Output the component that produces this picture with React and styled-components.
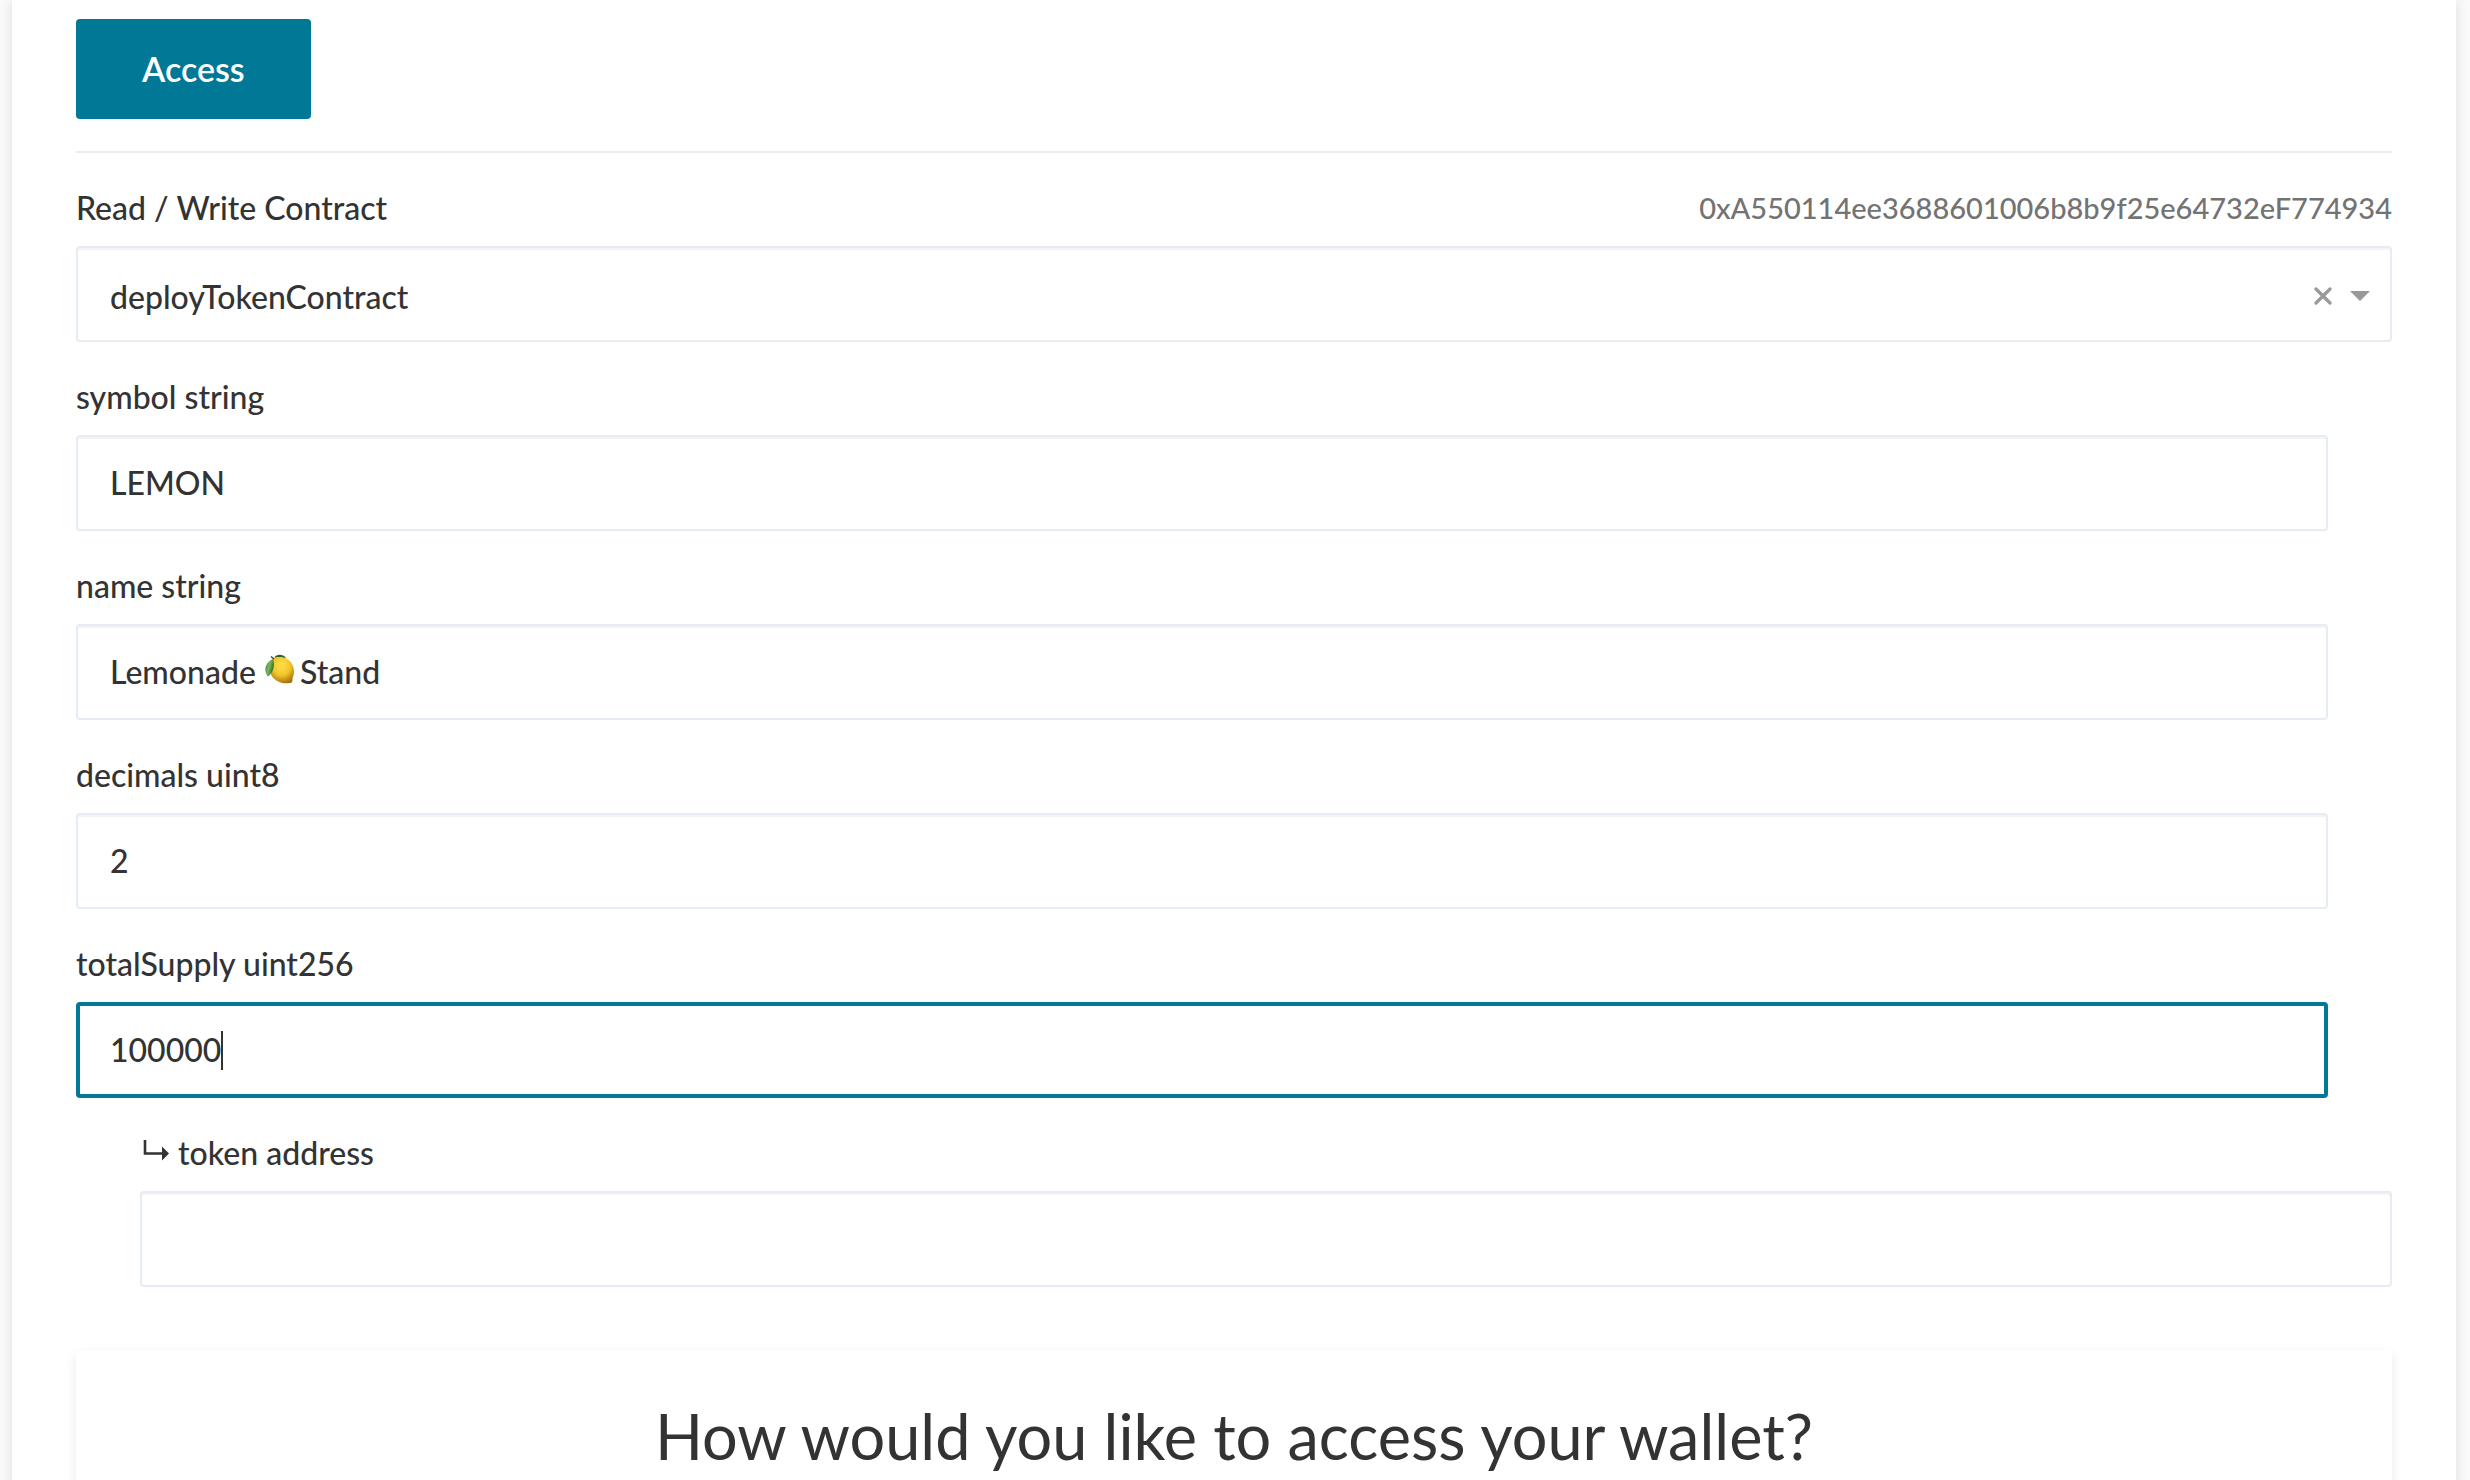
import React, { useState } from "react";
import styled, { createGlobalStyle, css } from "styled-components";

const GlobalStyle = createGlobalStyle`
  *, *::before, *::after { box-sizing: border-box; }
  html { background: #fafafa; overflow: hidden; }
  body {
    margin: 0;
    color: #333;
    background: #fafafa;
    font-family: Lato, "Liberation Sans", sans-serif;
    font-size: 32px;
    font-weight: 500;
    line-height: 48px;
  }
`;

const Page = styled.main`
  height: 100vh;
  padding: 0 14px 0 12px;
  overflow: hidden;
`;

const Panel = styled.section`
  display: flex;
  flex-direction: column;
  align-items: stretch;
  min-height: 100vh;
  padding: 19px 64px 0;
  background: #fff;
  box-shadow: 0 0 12px rgba(0, 0, 0, 0.12);
`;

const AccessButton = styled.button`
  align-self: flex-start;
  padding: 26px 66px;
  border: 0;
  border-radius: 4px;
  background: #007896;
  color: #fff;
  font: 600 34px/48px Lato, "Liberation Sans", sans-serif;
  cursor: pointer;
`;

const Divider = styled.hr`
  width: 100%;
  height: 2px;
  margin: 32px 0 0;
  border: 0;
  background: #ececec;
`;

const Form = styled.form`
  display: flex;
  flex-direction: column;
`;

const Field = styled.div`
  display: flex;
  flex-direction: column;
  gap: 14px;
  padding-top: 31px;
  padding-left: ${(p) => (p.$output ? "64px" : "0")};
  padding-right: ${(p) => (p.$input ? "64px" : "0")};
`;

const LabelRow = styled.div`
  display: flex;
  justify-content: space-between;
`;

const Label = styled.label`
  display: flex;
  align-items: center;
  gap: 8px;
`;

const Address = styled.span`
  color: #737373;
  font-size: 29px;
`;

const Frame = styled.div`
  position: relative;
  display: flex;
  height: 96px;
`;

const control = css`
  flex: 1;
  min-width: 0;
  margin: 0;
  border: 2px solid #e5ecf3;
  border-radius: 4px;
  outline: 0;
  background: #fff;
  box-shadow: inset 0 2px 0 rgba(63, 63, 68, 0.06);
  color: #333;
  font: 500 32px/48px Lato, "Liberation Sans", sans-serif;
`;

const TextInput = styled.input`
  ${control}
  padding: 0 32px;
  ${(p) =>
    p.$active &&
    css`
      border: 4px solid #007896;
      padding: 0 30px;
      box-shadow: none;
    `}
`;

const Select = styled.select`
  ${control}
  appearance: none;
  padding: 6px 120px 0 32px;
`;

const SelectTools = styled.div`
  position: absolute;
  top: 4px;
  right: 22px;
  bottom: 0;
  display: flex;
  align-items: center;
  gap: 18px;
  pointer-events: none;
`;

const ClearButton = styled.button`
  display: flex;
  padding: 0;
  border: 0;
  background: none;
  cursor: pointer;
  pointer-events: auto;
`;

const Overlay = styled.div`
  position: absolute;
  inset: 0;
  display: flex;
  align-items: center;
  padding: 0 34px;
  white-space: pre;
  pointer-events: none;
`;

const Ghost = styled.span`
  visibility: hidden;
`;

const Caret = styled.span`
  width: 2px;
  height: 39px;
  background: #333;
`;

const WalletCard = styled.section`
  flex: 1;
  margin-top: 63px;
  padding: 46px 32px;
  border-radius: 4px;
  background: #fff;
  box-shadow: 0 4px 12px rgba(0, 0, 0, 0.09);
`;

const Title = styled.h2`
  margin: 0;
  font-size: 63px;
  font-weight: 400;
  line-height: 80px;
  text-align: center;
`;

function CrossIcon() {
  return (
    <svg width="18" height="18" viewBox="0 0 18 18" aria-hidden="true">
      <path d="M2 2 16 16M16 2 2 16" stroke="#999" strokeWidth="3.2" strokeLinecap="round" />
    </svg>
  );
}

function ArrowIcon() {
  return (
    <svg width="20" height="10" viewBox="0 0 20 10" aria-hidden="true">
      <path d="M0 0H20L10 10Z" fill="#999" />
    </svg>
  );
}

function BranchIcon() {
  return (
    <svg width="30" height="26" viewBox="0 0 30 26" aria-hidden="true">
      <path d="M5 0V13.5H24" fill="none" stroke="#333" strokeWidth="2.6" />
      <path d="M22 6.5 29 13.5 22 20.5Z" fill="#333" />
    </svg>
  );
}

function LemonIcon() {
  return (
    <svg width="31" height="36" viewBox="0 0 31 36" aria-hidden="true">
      <defs>
        <radialGradient id="peel" cx="0.48" cy="0.32" r="0.68">
          <stop offset="0" stopColor="#ffe14a" />
          <stop offset="0.55" stopColor="#f0c52a" />
          <stop offset="1" stopColor="#a87610" />
        </radialGradient>
        <linearGradient id="leaf" x1="0" y1="0" x2="1" y2="0.5">
          <stop offset="0" stopColor="#2e7a25" />
          <stop offset="0.5" stopColor="#7cb860" />
          <stop offset="1" stopColor="#2c6a1d" />
        </linearGradient>
      </defs>
      <path d="M10.5 3.5C12 0 19-0.5 22 4L16 6Z" fill="#2f6420" />
      <path d="M9 4.5C14 2 23 2.500 27.500 9C30.500 14 30.800 20 28.500 24C28.500 27 28.500 29 26 29C20 30 13 28.500 8.500 23C5 19 5 9 9 4.500Z" fill="url(#peel)" />
      <path d="M9 5C2 8-1 15 3.500 22.500C8.500 20 11.500 12 9 5Z" fill="url(#leaf)" />
      <path d="M7 2.500 10 5" stroke="#4e4a25" strokeWidth="1.600" />
    </svg>
  );
}

function InputField({ id, label, value, active, overlay }) {
  const [text, setText] = useState(value);
  return (
    <Field $input>
      <Label htmlFor={id}>{label}</Label>
      <Frame>
        <TextInput id={id} $active={active} value={text} onChange={(e) => setText(e.target.value)} />
        {overlay}
      </Frame>
    </Field>
  );
}

export default function App() {
  return (
    <>
      <GlobalStyle />
      <Page>
        <Panel>
          <AccessButton type="button">Access</AccessButton>
          <Divider />
          <Form>
            <Field>
              <LabelRow>
                <Label htmlFor="method">Read / Write Contract</Label>
                <Address>0xA550114ee3688601006b8b9f25e64732eF774934</Address>
              </LabelRow>
              <Frame>
                <Select id="method" defaultValue="deployTokenContract">
                  <option>deployTokenContract</option>
                </Select>
                <SelectTools>
                  <ClearButton type="button" aria-label="Clear">
                    <CrossIcon />
                  </ClearButton>
                  <ArrowIcon />
                </SelectTools>
              </Frame>
            </Field>
            <InputField id="symbol" label="symbol string" value="LEMON" />
            <InputField
              id="name"
              label="name string"
              value={"Lemonade \u2003\u2009 Stand"}
              overlay={
                <Overlay>
                  <Ghost>{"Lemonade "}</Ghost>
                  <LemonIcon />
                </Overlay>
              }
            />
            <InputField id="decimals" label="decimals uint8" value="2" />
            <InputField
              id="supply"
              label="totalSupply uint256"
              value="100000"
              active
              overlay={
                <Overlay>
                  <Ghost>100000</Ghost>
                  <Caret />
                </Overlay>
              }
            />
            <Field $output>
              <Label htmlFor="token">
                <BranchIcon />
                token address
              </Label>
              <Frame>
                <TextInput id="token" readOnly />
              </Frame>
            </Field>
          </Form>
          <WalletCard>
            <Title>How would you like to access your wallet?</Title>
          </WalletCard>
        </Panel>
      </Page>
    </>
  );
}
